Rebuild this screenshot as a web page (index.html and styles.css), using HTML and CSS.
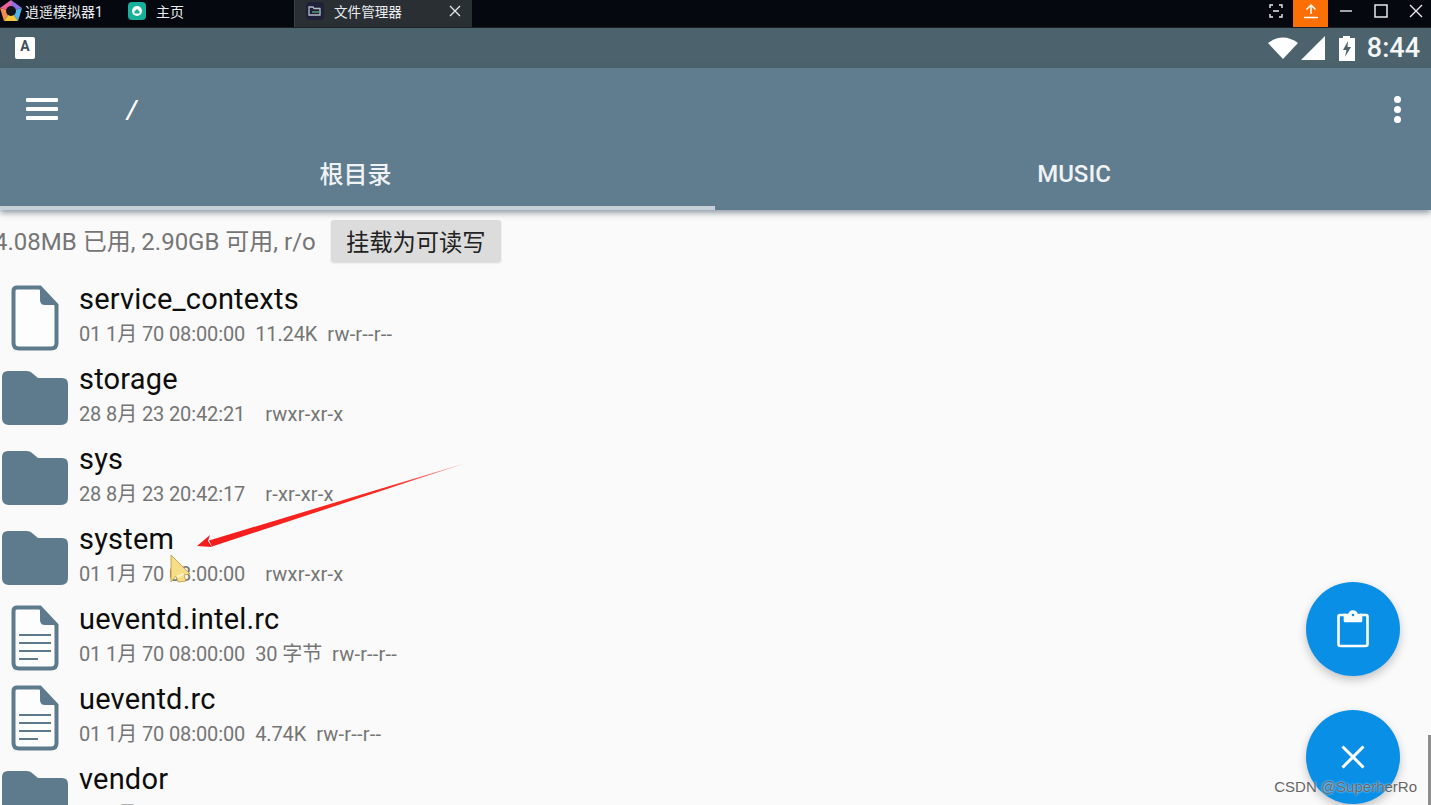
FILE: index.html
```html
<!DOCTYPE html>
<html lang="zh">
<head>
<meta charset="utf-8">
<title>文件管理器</title>
<link rel="stylesheet" href="styles.css">
</head>
<body>
<svg class="defs" width="0" height="0">
  <defs>
    <symbol id="folder" viewBox="0 0 68 56"><path d="M7 1H26Q29 1 31 3L37 8H61Q67 8 67 14V48Q67 55 60 55H8Q1 55 1 48V7Q1 1 7 1Z" fill="#5e7b8e"/></symbol>
    <symbol id="file" viewBox="0 0 48 66"><path d="M6 2.500H29L45.500 20V58Q45.500 63.500 40 63.500H8Q2.500 63.500 2.500 58V6Q2.500 2.500 6 2.500Z" fill="#fdfdfd" stroke="#5e7b8e" stroke-width="4"/><path d="M29 2.500V15Q29 20 34 20H45.500L29 2.500Z" fill="#5e7b8e"/></symbol>
    <symbol id="doc" viewBox="0 0 48 66"><path d="M6 2.500H29L45.500 20V58Q45.500 63.500 40 63.500H8Q2.500 63.500 2.500 58V6Q2.500 2.500 6 2.500Z" fill="#fdfdfd" stroke="#5e7b8e" stroke-width="4"/><path d="M29 2.500V15Q29 20 34 20H45.500L29 2.500Z" fill="#5e7b8e"/><path d="M8 30H40M8 38H40M8 46H40M8 54H27" stroke="#5e7b8e" stroke-width="2.200"/></symbol>
  </defs>
</svg>
<div class="window">
  <header class="titlebar">
    <div class="tab tab-brand">
      <svg class="brand-logo" width="22" height="22" viewBox="0 0 22 22"><path d="M11 0L22 8L11 11Z" fill="#8d6fe8"/><path d="M11 0L0 8L11 11Z" fill="#f0609a"/><path d="M0 8L4 21L11 11Z" fill="#f48a54"/><path d="M4 21H18L11 11Z" fill="#f6c63e"/><path d="M22 8L18 21L11 11Z" fill="#4fb4e8"/><circle cx="11" cy="11" r="5" fill="#11151b"/></svg>
      <span>逍遥模拟器1</span>
    </div>
    <div class="tab tab-home">
      <svg width="18" height="18" viewBox="0 0 18 18"><rect width="18" height="18" rx="4" fill="#17b09a"/><circle cx="9" cy="9" r="5" fill="#fff"/><path d="M6.500 9.500L9 7L11.500 9.500V11.500H6.500Z" fill="#17b09a"/></svg>
      <span>主页</span>
    </div>
    <div class="tab tab-active">
      <svg width="18" height="18" viewBox="0 0 18 18"><rect width="18" height="18" rx="4" fill="#20203a"/><path d="M3 5H7L8 6.500H14V13H3Z" fill="none" stroke="#b4bcc8" stroke-width="1.300"/><path d="M6 10H15" stroke="#5bb07a" stroke-width="1.300"/></svg>
      <span>文件管理器</span>
      <svg class="tab-close" width="12" height="12" viewBox="0 0 12 12"><path d="M1 1L11 11M11 1L1 11" stroke="#e6e8ea" stroke-width="1.300"/></svg>
    </div>
    <div class="win-controls">
      <div class="win-btn"><svg width="14" height="14" viewBox="0 0 14 14" fill="none" stroke="#e8eaec" stroke-width="1.400"><path d="M4 1H1V4M10 1H13V4M4 13H1V10M10 13H13V10M4 7H10"/></svg></div>
      <div class="win-btn win-upload"><svg width="16" height="16" viewBox="0 0 16 16" fill="none" stroke="#fff" stroke-width="1.500"><path d="M8 11V2M3.500 6.500L8 2L12.500 6.500M1 14.500H15"/></svg></div>
      <div class="win-btn"><svg width="14" height="14" viewBox="0 0 14 14"><path d="M1 7H13" stroke="#c8ccd0" stroke-width="1.600"/></svg></div>
      <div class="win-btn"><svg width="14" height="14" viewBox="0 0 14 14"><rect x="1" y="1" width="12" height="12" fill="none" stroke="#e8eaec" stroke-width="1.500"/></svg></div>
      <div class="win-btn"><svg width="14" height="14" viewBox="0 0 14 14"><path d="M1 1L13 13M13 1L1 13" stroke="#e8eaec" stroke-width="1.400"/></svg></div>
    </div>
  </header>

  <div class="statusbar">
    <div class="ime"><span>A</span></div>
    <div class="status-right">
      <svg class="wifi" width="30" height="22" viewBox="0 0 30 22"><path d="M0 6Q15 -5 30 6L15 22Z" fill="#fff"/></svg>
      <svg class="signal" width="24" height="24" viewBox="0 0 24 24"><path d="M24 0V24H0Z" fill="#fff"/></svg>
      <svg class="battery" width="18" height="25" viewBox="0 0 18 25"><path d="M5 0H12V2H17V25H1V2H5Z" fill="#fff"/><path d="M10 5L5 14H8.500L7 21L13 11H9.500Z" fill="#4c626c"/></svg>
      <span class="clock">8:44</span>
    </div>
  </div>

  <div class="appbar">
    <div class="toolbar">
      <div class="menu-icon"><i></i><i></i><i></i></div>
      <span class="path">/</span>
      <div class="more"><i></i><i></i><i></i></div>
    </div>
    <div class="tabs">
      <div class="app-tab app-tab-on">根目录</div>
      <div class="app-tab app-tab-off">MUSIC</div>
    </div>
  </div>

  <main class="content">
    <div class="info">
      <span class="usage">4.08MB 已用, 2.90GB 可用, r/o</span>
      <button class="mount">挂载为可读写</button>
    </div>
    <ul class="files">
      <li class="row"><span class="icon"><svg class="fi" width="48" height="66"><use href="#file"/></svg></span><div class="txt"><div class="name">service_contexts</div><div class="meta"><span>01 1月 70 08:00:00</span><span>11.24K</span><span>rw-r--r--</span></div></div></li>
      <li class="row"><span class="icon icon-dir"><svg width="68" height="56"><use href="#folder"/></svg></span><div class="txt"><div class="name">storage</div><div class="meta meta-dir"><span>28 8月 23 20:42:21</span><span>rwxr-xr-x</span></div></div></li>
      <li class="row"><span class="icon icon-dir"><svg width="68" height="56"><use href="#folder"/></svg></span><div class="txt"><div class="name">sys</div><div class="meta meta-dir"><span>28 8月 23 20:42:17</span><span>r-xr-xr-x</span></div></div></li>
      <li class="row"><span class="icon icon-dir"><svg width="68" height="56"><use href="#folder"/></svg></span><div class="txt"><div class="name">system</div><div class="meta meta-dir"><span>01 1月 70 08:00:00</span><span>rwxr-xr-x</span></div></div></li>
      <li class="row"><span class="icon"><svg class="fi" width="48" height="66"><use href="#doc"/></svg></span><div class="txt"><div class="name">ueventd.intel.rc</div><div class="meta"><span>01 1月 70 08:00:00</span><span>30 字节</span><span>rw-r--r--</span></div></div></li>
      <li class="row"><span class="icon"><svg class="fi" width="48" height="66"><use href="#doc"/></svg></span><div class="txt"><div class="name">ueventd.rc</div><div class="meta"><span>01 1月 70 08:00:00</span><span>4.74K</span><span>rw-r--r--</span></div></div></li>
      <li class="row"><span class="icon icon-dir"><svg width="68" height="56"><use href="#folder"/></svg></span><div class="txt"><div class="name">vendor</div><div class="meta meta-dir"><span>01 1月 70 08:00:00</span><span>rwxr-xr-x</span></div></div></li>
    </ul>
  </main>

  <svg class="arrow" width="280" height="90" viewBox="0 0 280 90">
    <defs><linearGradient id="fade" x1="1" y1="0" x2="0" y2="0"><stop offset="0" stop-color="#ff3b30" stop-opacity=".5"/><stop offset=".3" stop-color="#fb2a22"/><stop offset="1" stop-color="#f51c1c"/></linearGradient></defs>
    <path d="M276 1L19 78.500L22 84.500L276 1Z" fill="url(#fade)"/>
    <path d="M7 84L20 73L18 79L22 85Z" fill="#f51c1c"/>
  </svg>
  <svg class="cursor" width="22" height="30" viewBox="0 0 22 30"><path d="M1 1L20 20L14 21L16 27L8 28L6 22L1 28Z" fill="#f6dd86" stroke="#b99b3f" stroke-width=".8"/><path d="M6 22L13 19L14 21L8 24Z" fill="#fdf3c4"/></svg>

  <button class="fab fab-paste" aria-label="粘贴"><svg width="32" height="38" viewBox="0 0 32 38" fill="none" stroke="#fff" stroke-width="2.600" stroke-linejoin="round"><path d="M9 5H3Q1.500 5 1.500 6.500V34Q1.500 36 3.500 36H28.500Q30.500 36 30.500 34V6.500Q30.500 5 29 5H23"/><path d="M8 11H24V5H19.500A3.500 3.500 0 0 0 12.500 5H8Z" fill="#fff"/><circle cx="16" cy="5" r="1.300" fill="#0a8fe6" stroke="none"/></svg></button>
  <button class="fab fab-close" aria-label="关闭"><svg width="26" height="26" viewBox="0 0 26 26"><path d="M2.500 2.500L23.500 23.500M23.500 2.500L2.500 23.500" stroke="#fff" stroke-width="3"/></svg></button>
  <div class="scrollbar"></div>
  <div class="watermark">CSDN @SuperherRo</div>
</div>
</body>
</html>
```
FILE: styles.css
```css
* { box-sizing: border-box; }
html, body { margin: 0; height: 100%; overflow: hidden; }
body { font-family: Roboto, "Noto Sans CJK SC", sans-serif; background: #fafafa; }
.defs { position: absolute; }
.window { position: relative; width: 1431px; height: 805px; overflow: hidden; display: flex; flex-direction: column; }

.titlebar { height: 28px; flex: none; display: flex; background: #05090f; color: #e9ebee; font-size: 14px; border-bottom: 1px solid #1a2126; }
.tab { display: flex; align-items: center; height: 27px; padding-bottom: 6px; }
.tab-brand { width: 128px; gap: 3px; }
.tab-home { width: 166px; gap: 10px; }
.tab-active { width: 178px; padding-left: 11px; gap: 10px; background: #2a2f33; border-left: 1px solid #3a4044; font-size: 13.6px; }
.tab-close { margin-left: 37px; }
.brand-logo { flex: none; }
.win-controls { margin-left: auto; margin-right: -2px; display: flex; align-items: center; }
.win-btn { width: 35px; height: 27px; padding-bottom: 5px; display: flex; align-items: center; justify-content: center; }
.win-upload { background: #fb6f04; }

.statusbar { height: 40px; flex: none; display: flex; align-items: center; justify-content: space-between; padding: 0 11px 0 15px; background: #4c626c; }
.ime { width: 20px; height: 22px; border-radius: 2px; background: #fff; color: #3f5059; display: flex; justify-content: center; font-size: 14px; font-weight: 700; line-height: 19px; }
.status-right { display: flex; align-items: center; color: #f4f6f7; }
.signal { margin-left: 3px; }
.battery { margin-left: 13px; }
.clock { font-size: 27px; font-weight: 500; margin-left: 11px; }

.appbar { height: 142px; flex: none; background: #607d8f; color: #fff; display: flex; flex-direction: column; box-shadow: 0 3px 6px rgba(60, 80, 95, .55); z-index: 1; }
.toolbar { height: 82px; flex: none; display: flex; align-items: center; padding: 0 30px 0 26px; }
.menu-icon { width: 32px; display: flex; flex-direction: column; gap: 5px; }
.menu-icon i { height: 4px; background: #fff; border-radius: 1px; }
.path { margin-left: 69px; font-size: 26px; font-style: italic; font-weight: 500; }
.more { margin-left: auto; display: flex; flex-direction: column; gap: 3px; }
.more i { width: 7px; height: 7px; border-radius: 50%; background: #fff; }
.tabs { flex: 1; display: flex; }
.app-tab { width: 715px; height: 60px; padding-bottom: 12px; display: flex; align-items: center; justify-content: center; font-size: 24px; font-weight: 500; color: #f0f3f5; border-bottom: 4px solid transparent; }
.app-tab-on { border-bottom-color: #c5d0d7; padding-right: 4px; }
.app-tab-off { padding-left: 3px; padding-bottom: 8px; }

.content { flex: 1; background: #fafafa; min-height: 0; }
.info { height: 70px; display: flex; align-items: flex-start; gap: 15px; margin-left: -6px; padding-top: 10px; color: #757575; font-size: 24px; }
.usage { line-height: 42px; margin-top: 1px; }
.mount { height: 42px; width: 170px; padding: 0; border: 0; border-radius: 3px; background: #dcdcdc; color: #222; font: 23.3px "Noto Sans CJK SC", sans-serif; box-shadow: 0 1px 2px rgba(0, 0, 0, .15); }
.files { margin: 0; padding: 0; list-style: none; }
.row { height: 80px; display: flex; }
.icon { width: 79px; flex: none; padding: 5px 0 0 11px; }
.icon-dir { padding: 10px 0 0 1px; }
.icon svg { display: block; }
.txt { min-width: 0; }
.name { font-size: 29px; letter-spacing: .2px; line-height: 38px; color: #0d0d0d; }
.meta { display: flex; gap: 10px; font-size: 20px; letter-spacing: -.12px; line-height: 28px; margin-top: 2px; color: #757575; white-space: nowrap; }
.meta span:last-child { letter-spacing: .2px; }
.meta-dir { gap: 20px; }

.arrow { position: absolute; left: 190px; top: 462px; }
.cursor { position: absolute; left: 170px; top: 554px; }
.fab { position: absolute; left: 1306px; width: 94px; height: 94px; padding: 0; border: 0; border-radius: 50%; background: #0a8fe6; display: flex; align-items: center; justify-content: center; box-shadow: 0 4px 10px rgba(0, 0, 0, .22); }
.fab-paste { top: 582px; }
.fab-close { top: 710px; }
.scrollbar { position: absolute; left: 1428px; top: 735px; width: 3px; height: 70px; background: #8e8e8e; }
.watermark { position: absolute; right: 14px; top: 778px; font: 15px "Liberation Sans", sans-serif; color: #666; text-shadow: 0 0 2px rgba(255, 255, 255, .9); }
```
